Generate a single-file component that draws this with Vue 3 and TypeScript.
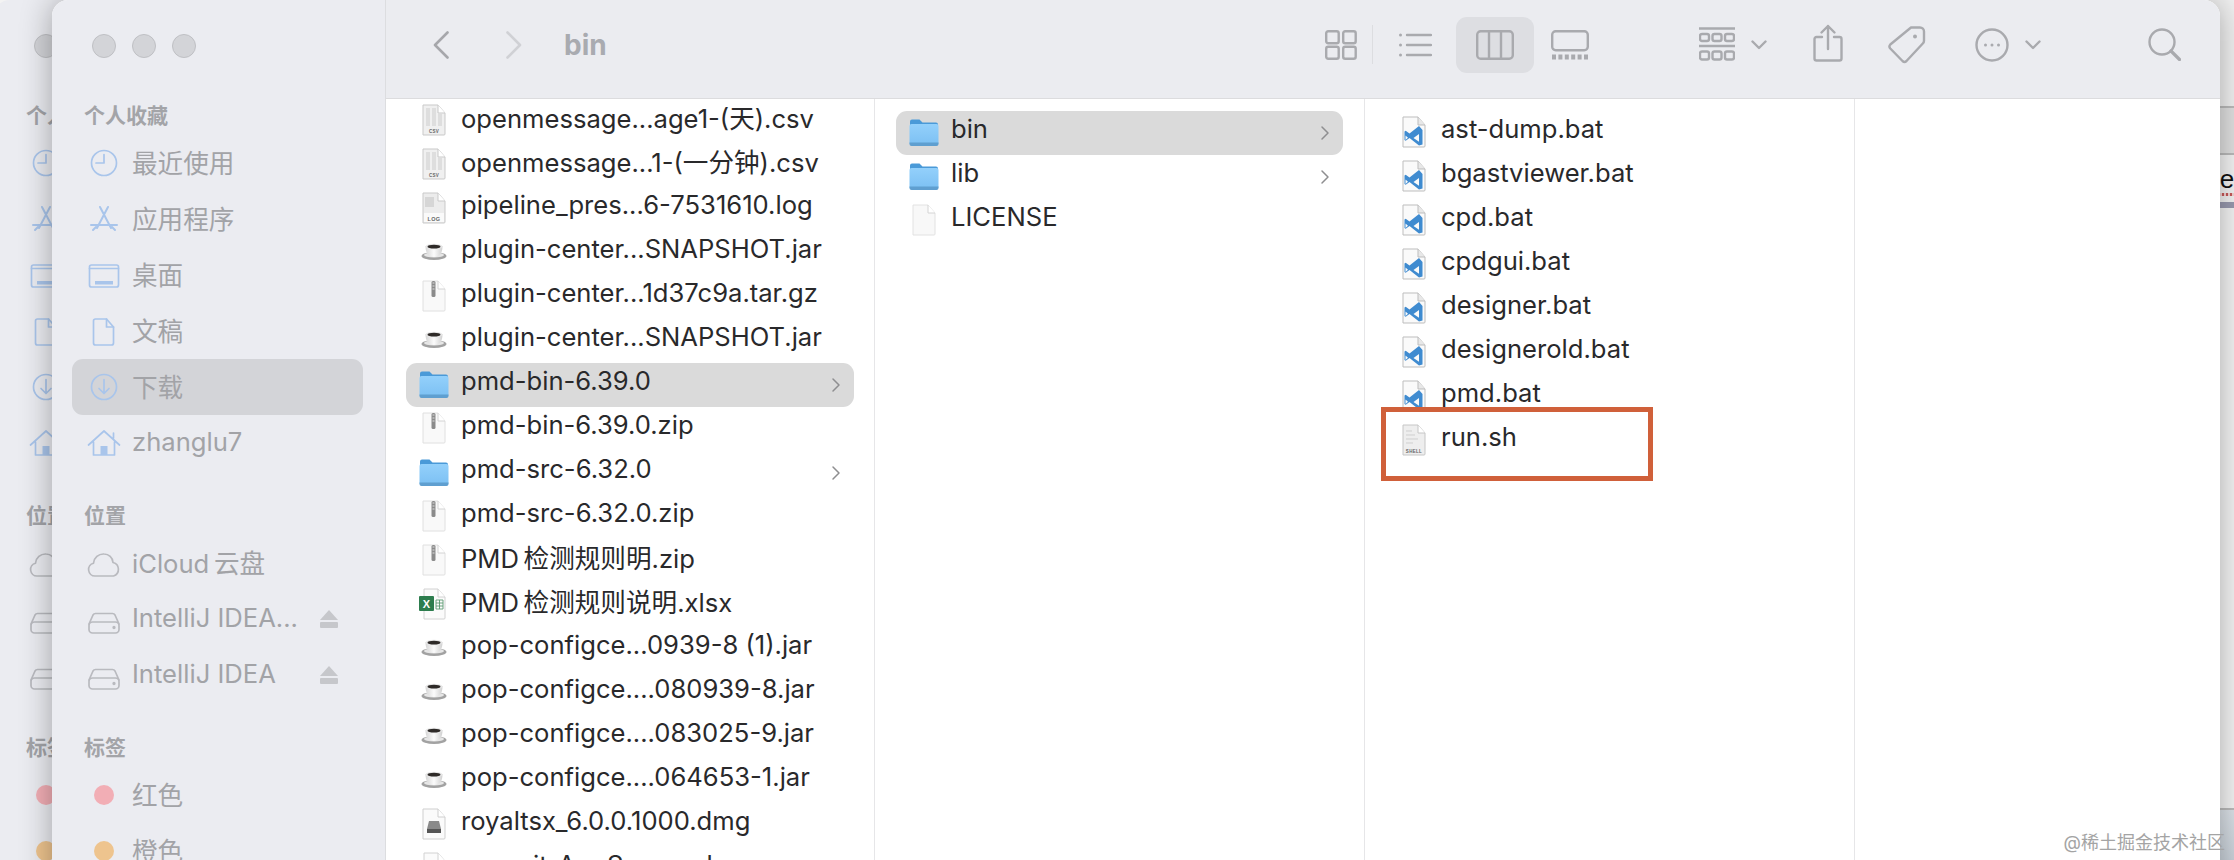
<template>
  <div class="desktop">
    <!-- shared file icons -->
    <svg class="sprite" width="0" height="0">
      <defs>
        <linearGradient id="folderBody" x1="0" y1="0" x2="0" y2="1">
          <stop offset="0" stop-color="#93d0fb" />
          <stop offset="1" stop-color="#7cc0f3" />
        </linearGradient>
        <linearGradient id="cupBody" x1="0" y1="0" x2="1" y2="0">
          <stop offset="0" stop-color="#d6d6d6" />
          <stop offset=".5" stop-color="#fbfbfb" />
          <stop offset="1" stop-color="#d0d0d0" />
        </linearGradient>
        <symbol id="f-folder" viewBox="0 0 32 32">
          <path d="M2 5.500a2 2 0 0 1 2-2h7.500l3 3h13.500a2 2 0 0 1 2 2V12H2z" fill="#4a9ad8" />
          <rect x="1.500" y="8" width="29" height="21" rx="2" fill="url(#folderBody)" />
          <path d="M1.500 26.500h29V28a2 2 0 0 1-2 2h-25a2 2 0 0 1-2-2z" fill="#5f9fd0" />
        </symbol>
        <symbol id="f-doc" viewBox="0 0 32 32">
          <path d="M5 1h15l7 8v21a1 1 0 0 1-1 1H5z" fill="#f8f8f8" stroke="#e2e2e2" />
          <path d="M20 1v8h7" fill="#fff" stroke="#d4d4d4" />
        </symbol>
        <symbol id="f-csv" viewBox="0 0 32 32">
          <path d="M5 1h15l7 8v21a1 1 0 0 1-1 1H5z" fill="#f0f0f0" stroke="#c9c9c9" />
          <path d="M20 1v8h7" fill="#fff" stroke="#c9c9c9" />
          <path d="M8 4h4v18H8zM14 4h4v18h-4zM20 10h4v12h-4z" fill="#dedede" />
          <text x="16" y="28.500" text-anchor="middle" class="mini">CSV</text>
        </symbol>
        <symbol id="f-log" viewBox="0 0 32 32">
          <path d="M5 1h15l7 8v21a1 1 0 0 1-1 1H5z" fill="#ececec" stroke="#c9c9c9" />
          <path d="M20 1v8h7" fill="#fff" stroke="#c9c9c9" />
          <path d="M7 5h9v10H7z" fill="#d6d6d6" />
          <rect x="6" y="21" width="20" height="9" fill="#fafafa" />
          <text x="16" y="28.500" text-anchor="middle" class="mini wide">LOG</text>
        </symbol>
        <symbol id="f-shell" viewBox="0 0 32 32">
          <path d="M5 1h15l7 8v21a1 1 0 0 1-1 1H5z" fill="#eeeeee" stroke="#c6c6c6" />
          <path d="M20 1v8h7" fill="#fff" stroke="#c6c6c6" />
          <path d="M8 7h6M8 11h9M8 15h12M8 19h7" stroke="#cfcfcf" stroke-width="1" />
          <text x="16" y="28.500" text-anchor="middle" class="mini">SHELL</text>
        </symbol>
        <symbol id="f-jar" viewBox="0 0 32 32">
          <ellipse cx="16" cy="20" rx="12.500" ry="4" fill="#a2a2a2" />
          <ellipse cx="16" cy="19" rx="10" ry="2.500" fill="#e6e6e6" />
          <path d="M7.500 10h17c0 7-2.500 11-8.500 11S7.500 17 7.500 10z" fill="url(#cupBody)" />
          <ellipse cx="16" cy="10.500" rx="8.500" ry="2.800" fill="#e8e8e8" />
          <ellipse cx="16" cy="10.700" rx="6.500" ry="1.900" fill="#2e2a28" />
        </symbol>
        <symbol id="f-zip" viewBox="0 0 32 32">
          <path d="M5 1h15l7 8v21a1 1 0 0 1-1 1H5z" fill="#f9f9f9" stroke="#e0e0e0" />
          <path d="M20 1v8h7" fill="#fff" stroke="#d4d4d4" />
          <rect x="13.500" y="1" width="4" height="16" rx="1.500" fill="#8b8b8b" />
          <path d="M14.500 3h2M14.500 6h2M14.500 9h2" stroke="#dcdcdc" />
        </symbol>
        <symbol id="f-xlsx" viewBox="0 0 32 32">
          <path d="M6 1h14l7 8v21a1 1 0 0 1-1 1H6z" fill="#fbfbfb" stroke="#d2d2d2" />
          <path d="M20 1v8h7" fill="#fff" stroke="#d2d2d2" />
          <rect x="1" y="8" width="15" height="15" rx="1" fill="#2d7d4e" />
          <text x="8.500" y="20" text-anchor="middle" class="xl">X</text>
          <path d="M18 12h7v9h-7zM18 15h7M18 18h7M21.500 12v9" fill="none" stroke="#5c9a73" stroke-width=".9" />
        </symbol>
        <symbol id="f-dmg" viewBox="0 0 32 32">
          <path d="M5 1h15l7 8v21a1 1 0 0 1-1 1H5z" fill="#fbfbfb" stroke="#cfcfcf" />
          <path d="M20 1v8h7" fill="#fff" stroke="#cfcfcf" />
          <path d="M11 13h10l2 8v4H9v-4z" fill="#8a8a8a" />
          <rect x="9" y="21" width="14" height="4" fill="#555" />
        </symbol>
        <symbol id="f-bat" viewBox="0 0 32 32">
          <path d="M5 1h15l7 8v21a1 1 0 0 1-1 1H5z" fill="#fafafa" stroke="#bdbdbd" />
          <path d="M20 1v8h7" fill="#e8e8e8" stroke="#bdbdbd" />
          <path d="M24.500 14v14.500l-3.500 1-9.500-7.500-3.800 2.800-1.200-.8v-8.400l1.200-.8 3.800 2.800 9.500-7.500zM21 18l-5.500 4 5.500 3.800zM7.500 19.500v4.500l2.500-2.200z" fill="#3f8bd0" fill-rule="evenodd" />
        </symbol>
      </defs>
    </svg>

    <!-- app behind the finder, only a sliver is visible -->
    <div class="back-app">
      <div class="strip strip-top"></div>
      <div class="strip strip-tabs"></div>
      <div class="strip strip-doc">
        <span class="he">He</span>
        <span class="squiggle"></span>
        <span class="select-bar"></span>
      </div>
      <div class="strip strip-foot"></div>
    </div>

    <div
      v-for="win in windows"
      :key="win"
      class="window"
      :class="win"
    >
      <aside class="sidebar">
        <div class="lights">
          <span></span>
          <span></span>
          <span></span>
        </div>
        <section v-for="group in sidebar" :key="group.title" class="side-group">
          <h4>{{ win === 'front' ? group.title : group.title.slice(0, 2) }}</h4>
          <div
            v-for="item in group.items"
            :key="item.label"
            class="side-row"
            :class="{ selected: win === 'front' && item.label === '下载' }"
          >
            <span v-if="item.dot" class="tag-dot" :style="{ background: item.dot }"></span>
            <svg v-else class="side-icon" :class="{ grey: group.title === '位置' }" viewBox="0 0 40 40" fill="none" stroke="currentColor" stroke-width="1.700" stroke-linecap="round" stroke-linejoin="round">
              <template v-if="item.icon === 'clock'">
                <circle cx="20" cy="20" r="12.500" />
                <path d="M20 11.500V20h-8" />
              </template>
              <template v-else-if="item.icon === 'apps'">
                <path d="M16 8l11 21M24 8L13 29M7 26h26M9 31l3-3M31 31l-3-3" stroke-width="2" />
              </template>
              <template v-else-if="item.icon === 'desktop'">
                <rect x="5.500" y="10" width="29" height="22" rx="2" />
                <path d="M5.500 13.500h29" />
                <rect x="11" y="26" width="18" height="3.500" fill="currentColor" stroke="none" />
              </template>
              <template v-else-if="item.icon === 'doc'">
                <path d="M11.500 8h11l7 8v16a2 2 0 0 1-2 2h-16a2 2 0 0 1-2-2V10a2 2 0 0 1 2-2z" />
                <path d="M22.500 8v8h7" />
              </template>
              <template v-else-if="item.icon === 'download'">
                <circle cx="20" cy="20" r="12.500" />
                <path d="M20 12.500V26M15 21.500l5 5 5-5" />
              </template>
              <template v-else-if="item.icon === 'home'">
                <path d="M4.500 22L20 8l15.500 14M9.500 19v13h21V19M29.500 10v5" />
                <rect x="16.500" y="23" width="7" height="9" fill="currentColor" stroke="none" />
              </template>
              <template v-else-if="item.icon === 'cloud'">
                <path d="M11 33a6.500 6.500 0 0 1-1.500-12.800A10 10 0 0 1 20 11a9 9 0 0 1 9 8.500A7 7 0 0 1 29.500 33z" />
              </template>
              <template v-else-if="item.icon === 'disk'">
                <path d="M5 25l4-9a3 3 0 0 1 2.500-1.500h17A3 3 0 0 1 31 16l4 9" />
                <rect x="5" y="23" width="30" height="11" rx="3.500" />
                <circle cx="30" cy="28.500" r=".8" fill="currentColor" />
              </template>
            </svg>
            <!-- labels of the back window lie fully under the front one -->
            <span v-if="win === 'front'" class="side-label">{{ item.label }}</span>
            <svg v-if="win === 'front' && item.eject" class="eject" viewBox="0 0 20 20">
              <path d="M10 1l9 10H1z" />
              <rect x="1" y="13" width="18" height="6" rx="1" />
            </svg>
          </div>
        </section>
      </aside>

      <main v-if="win === 'front'" class="content">
        <header class="toolbar">
          <svg class="nav-btn" viewBox="0 0 16 28" fill="none" stroke="#a6a7ab" stroke-width="2.600" stroke-linecap="round" stroke-linejoin="round">
            <path d="M14.500 1.500L2 14l12.500 12.500" />
          </svg>
          <svg class="nav-btn forward" viewBox="0 0 16 28" fill="none" stroke="#d0d1d5" stroke-width="2.600" stroke-linecap="round" stroke-linejoin="round">
            <path d="M1.500 1.500L14 14 1.500 26.500" />
          </svg>
          <span class="title">bin</span>

          <div class="views">
            <svg class="tool" width="32" height="30" viewBox="0 0 32 30">
              <rect x="1.200" y="1.200" width="12.500" height="12" rx="2" />
              <rect x="18.200" y="1.200" width="12.500" height="12" rx="2" />
              <rect x="1.200" y="16.800" width="12.500" height="12" rx="2" />
              <rect x="18.200" y="16.800" width="12.500" height="12" rx="2" />
            </svg>
            <span class="divider"></span>
            <svg class="tool" width="34" height="26" viewBox="0 0 34 26">
              <path d="M9 3h24M9 13h24M9 23h24" />
              <circle cx="2.500" cy="3" r="1.500" class="solid" />
              <circle cx="2.500" cy="13" r="1.500" class="solid" />
              <circle cx="2.500" cy="23" r="1.500" class="solid" />
            </svg>
            <div class="view-active">
              <svg class="tool" width="38" height="30" viewBox="0 0 38 30">
                <rect x="1.200" y="1.200" width="35.600" height="27.600" rx="3.500" />
                <path d="M13 1.200v27.600M25 1.200v27.600" />
              </svg>
            </div>
            <svg class="tool" width="38" height="30" viewBox="0 0 38 30">
              <rect x="1.200" y="1.200" width="35.600" height="19" rx="3.500" />
              <path class="film" d="M1 27h36" />
            </svg>
          </div>

          <div class="actions">
            <div class="with-caret">
              <svg class="tool" width="36" height="36" viewBox="0 0 36 36">
                <path d="M0 1.500h36M0 19h36" />
                <g>
                  <rect x="1" y="7" width="9" height="7" rx="2" />
                  <rect x="13.500" y="7" width="9" height="7" rx="2" />
                  <rect x="26" y="7" width="9" height="7" rx="2" />
                  <rect x="1" y="24.500" width="9" height="8" rx="2" />
                  <rect x="13.500" y="24.500" width="9" height="8" rx="2" />
                  <rect x="26" y="24.500" width="9" height="8" rx="2" />
                </g>
              </svg>
              <svg class="tool caret" width="16" height="10" viewBox="0 0 16 10"><path d="M1.500 1.500L8 8l6.500-6.500" /></svg>
            </div>
            <svg class="tool share" width="30" height="38" viewBox="0 0 30 38">
              <path d="M9 13H3.500a2 2 0 0 0-2 2v19.500a2 2 0 0 0 2 2h23a2 2 0 0 0 2-2V15a2 2 0 0 0-2-2H21" />
              <path d="M15 25V2M8.500 8.500L15 2l6.500 6.500" />
            </svg>
            <svg class="tool tag" width="38" height="38" viewBox="0 0 38 38">
              <path d="M23 1.500h9a4 4 0 0 1 4 4v9a4 4 0 0 1-1.200 3L18.500 35a3 3 0 0 1-4 0L2.300 22.500a3 3 0 0 1 0-4z" />
              <circle cx="27" cy="10.500" r="2" class="solid" />
            </svg>
            <div class="with-caret more">
              <svg class="tool" width="34" height="34" viewBox="0 0 34 34">
                <circle cx="17" cy="17" r="15.500" />
                <circle cx="10.500" cy="17" r="1.500" class="solid" />
                <circle cx="17" cy="17" r="1.500" class="solid" />
                <circle cx="23.500" cy="17" r="1.500" class="solid" />
              </svg>
              <svg class="tool caret" width="16" height="10" viewBox="0 0 16 10"><path d="M1.500 1.500L8 8l6.500-6.500" /></svg>
            </div>
            <svg class="tool search" width="33" height="33" viewBox="0 0 33 33">
              <circle cx="14" cy="14" r="12.500" />
              <path d="M23 23l8.500 8.500" stroke-width="3.200" />
            </svg>
          </div>
        </header>

        <div class="columns">
          <div v-for="(col, i) in columns" :key="i" class="column" :class="{ first: i === 0 }">
            <div
              v-for="(row, r) in col"
              :key="r"
              class="file-row"
              :class="{ selected: row.selected }"
            >
              <svg class="file-icon"><use :href="`#f-${row.icon}`" /></svg>
              <span class="file-name">{{ row.name }}</span>
              <svg v-if="row.icon === 'folder'" class="chevron" viewBox="0 0 10 16" fill="none" stroke="#8e8e90" stroke-width="1.500" stroke-linecap="round" stroke-linejoin="round">
                <path d="M2 2l6 6-6 6" />
              </svg>
            </div>
          </div>
          <div class="column empty"></div>
        </div>
      </main>
    </div>

    <div class="callout"></div>
    <div class="watermark">@稀土掘金技术社区</div>
  </div>
</template>

<script setup lang="ts">
interface SideItem {
  label: string
  icon?: string
  dot?: string
  eject?: boolean
}

interface SideGroup {
  title: string
  items: SideItem[]
}

interface FileRow {
  name: string
  icon: string
  selected?: boolean
}

const windows = ['back', 'front']

const sidebar: SideGroup[] = [
  {
    title: '个人收藏',
    items: [
      { label: '最近使用', icon: 'clock' },
      { label: '应用程序', icon: 'apps' },
      { label: '桌面', icon: 'desktop' },
      { label: '文稿', icon: 'doc' },
      { label: '下载', icon: 'download' },
      { label: 'zhanglu7', icon: 'home' },
    ],
  },
  {
    title: '位置',
    items: [
      { label: 'iCloud\u2009云盘', icon: 'cloud' },
      { label: 'IntelliJ IDEA...', icon: 'disk', eject: true },
      { label: 'IntelliJ IDEA', icon: 'disk', eject: true },
    ],
  },
  {
    title: '标签',
    items: [
      { label: '红色', dot: '#f2aeb5' },
      { label: '橙色', dot: '#eec48e' },
    ],
  },
]

const columns: FileRow[][] = [
  [
    { name: 'openmessage...age1-(天).csv', icon: 'csv' },
    { name: 'openmessage...1-(一分钟).csv', icon: 'csv' },
    { name: 'pipeline_pres...6-7531610.log', icon: 'log' },
    { name: 'plugin-center...SNAPSHOT.jar', icon: 'jar' },
    { name: 'plugin-center...1d37c9a.tar.gz', icon: 'zip' },
    { name: 'plugin-center...SNAPSHOT.jar', icon: 'jar' },
    { name: 'pmd-bin-6.39.0', icon: 'folder', selected: true },
    { name: 'pmd-bin-6.39.0.zip', icon: 'zip' },
    { name: 'pmd-src-6.32.0', icon: 'folder' },
    { name: 'pmd-src-6.32.0.zip', icon: 'zip' },
    { name: 'PMD\u2009检测规则明.zip', icon: 'zip' },
    { name: 'PMD\u2009检测规则说明.xlsx', icon: 'xlsx' },
    { name: 'pop-configce...0939-8 (1).jar', icon: 'jar' },
    { name: 'pop-configce....080939-8.jar', icon: 'jar' },
    { name: 'pop-configce....083025-9.jar', icon: 'jar' },
    { name: 'pop-configce....064653-1.jar', icon: 'jar' },
    { name: 'royaltsx_6.0.0.1000.dmg', icon: 'dmg' },
    { name: 'pop-sit-AppServer.xlsx', icon: 'xlsx' },
  ],
  [
    { name: 'bin', icon: 'folder', selected: true },
    { name: 'lib', icon: 'folder' },
    { name: 'LICENSE', icon: 'doc' },
  ],
  [
    { name: 'ast-dump.bat', icon: 'bat' },
    { name: 'bgastviewer.bat', icon: 'bat' },
    { name: 'cpd.bat', icon: 'bat' },
    { name: 'cpdgui.bat', icon: 'bat' },
    { name: 'designer.bat', icon: 'bat' },
    { name: 'designerold.bat', icon: 'bat' },
    { name: 'pmd.bat', icon: 'bat' },
    { name: 'run.sh', icon: 'shell' },
  ],
]
</script>

<style>
html,
body {
  margin: 0;
  background: #fff;
}
</style>

<style scoped>
.desktop {
  position: relative;
  width: 2234px;
  height: 860px;
  overflow: hidden;
  background: #f3f3f3;
  font-family: Inter, "Noto Sans CJK SC", sans-serif;
}

.sprite {
  position: absolute;
}

.mini {
  font: 600 4.500px "Liberation Sans", sans-serif;
  fill: #666;
  letter-spacing: 0.3px;
}

.mini.wide {
  font-size: 5.500px;
}

.xl {
  font: 700 11px "Liberation Sans", sans-serif;
  fill: #fff;
}

/* sliver of the other app at the right edge */
.back-app {
  position: absolute;
  right: 0;
  top: 0;
  bottom: 0;
  width: 20px;
  display: flex;
  flex-direction: column;
}

.strip {
  position: relative;
  border-bottom: 2px solid #bcbcbc;
  overflow: hidden;
}

.strip-top {
  height: 106px;
  background: #f2f2f2;
}

.strip-tabs {
  height: 45px;
  background: #e2e2e2;
}

.strip-doc {
  height: 653px;
  background: #f5f5f5;
}

.strip-foot {
  flex: 1;
  border: 0;
  background: linear-gradient(#dde3e9, #cbd3db);
}

.he {
  position: absolute;
  left: -13px;
  top: 9px;
  font: 26px "Liberation Sans", sans-serif;
  color: #111;
}

.squiggle {
  position: absolute;
  left: 0;
  right: 0;
  top: 38px;
  height: 3px;
  background: repeating-linear-gradient(90deg, #c85a5a 0 2px, #f5d5d5 2px 4px);
}

.select-bar {
  position: absolute;
  left: 0;
  right: 0;
  top: 47px;
  height: 6px;
  background: #9a9bb0;
}

/* finder windows */
.window {
  position: absolute;
  top: 0;
  height: 900px;
  display: flex;
  border-radius: 16px 16px 0 0;
  overflow: hidden;
}

.window.back {
  left: -6px;
  width: 334px;
  background: #ecedf1;
}

.window.front {
  left: 52px;
  width: 2168px;
  background: #fff;
  box-shadow: 0 0 32px rgba(0, 0, 0, 0.32);
}

.sidebar {
  flex: 0 0 334px;
  box-sizing: border-box;
  padding-top: 34px;
  background: #ebecf1;
  border-right: 1px solid #dcdde0;
}

.lights {
  display: flex;
  gap: 16px;
  height: 24px;
  padding-left: 40px;
  margin-bottom: 39px;
}

.lights span {
  box-sizing: border-box;
  width: 24px;
  height: 24px;
  border-radius: 50%;
  background: #d3d4d8;
  border: 1px solid #bfc0c4;
}

.side-group + .side-group {
  margin-top: 26px;
}

.side-group h4 {
  margin: 0;
  height: 38px;
  line-height: 38px;
  padding-left: 32px;
  font-size: 21px;
  font-weight: 700;
  color: #a3a4a8;
}

.side-row {
  display: flex;
  align-items: center;
  height: 56px;
  margin: 0 22px 0 20px;
  padding: 0 24px 0 12px;
  border-radius: 11px;
}

.side-row.selected {
  background: #d3d4d8;
}

.side-icon {
  flex: none;
  width: 40px;
  height: 40px;
  color: #a9c5eb;
}

.side-icon.grey {
  color: #b9babf;
}

.tag-dot {
  flex: none;
  width: 20px;
  height: 20px;
  margin: 0 10px;
  border-radius: 50%;
}

.side-label {
  flex: 1;
  margin-left: 8px;
  padding-bottom: 4px;
  font-size: 25.600px;
  color: #a2a3a7;
  white-space: nowrap;
}

.eject {
  flex: none;
  width: 20px;
  height: 20px;
  fill: #c6c7cb;
}

.content {
  flex: 1;
  min-width: 0;
  display: flex;
  flex-direction: column;
}

.toolbar {
  flex: none;
  box-sizing: border-box;
  height: 99px;
  padding: 0 39px 9px 47px;
  display: flex;
  align-items: center;
  background: #ebecf0;
  border-bottom: 1px solid #dcdcde;
}

.nav-btn {
  flex: none;
  width: 16px;
  height: 28px;
}

.nav-btn.forward {
  margin-left: 57px;
}

.title {
  margin-left: 42px;
  font-size: 28px;
  font-weight: 700;
  color: #a9abb0;
}

.views {
  margin-left: auto;
  display: flex;
  align-items: center;
}

.tool {
  flex: none;
  fill: none;
  stroke: #a9aaae;
  stroke-width: 2.400;
  stroke-linecap: round;
  stroke-linejoin: round;
}

.tool .solid {
  fill: #a9aaae;
  stroke: none;
}

.tool .film {
  stroke-width: 5;
  stroke-linecap: butt;
  stroke-dasharray: 4 2.400;
}

.divider {
  width: 1px;
  height: 39px;
  margin: 0 25px 0 15px;
  background: #dcdde0;
}

.view-active {
  width: 78px;
  height: 56px;
  margin: 0 17px 0 24px;
  border-radius: 11px;
  background: #dddee2;
  display: flex;
  align-items: center;
  justify-content: center;
}

.actions {
  margin-left: 110px;
  display: flex;
  align-items: center;
}

.with-caret {
  display: flex;
  align-items: center;
  gap: 16px;
}

.share {
  margin: -4px 0 0 46px;
}

.tag {
  margin-left: 45px;
}

.more {
  margin-left: 49px;
}

.search {
  margin-left: 107px;
}

.columns {
  flex: 1;
  display: flex;
  min-height: 0;
  background: #fff;
}

.column {
  flex: 0 0 490px;
  box-sizing: border-box;
  padding: 12px 21px 0;
  border-right: 1px solid #e6e6e8;
}

.column.first {
  flex-basis: 489px;
  padding: 0 20px;
}

.column.empty {
  flex: 1;
  border: 0;
}

.file-row {
  display: flex;
  align-items: center;
  height: 44px;
  padding: 0 13px 0 12px;
  border-radius: 11px;
}

.file-row.selected {
  background: #dadada;
}

.file-icon {
  flex: none;
  width: 32px;
  height: 32px;
  margin-top: -2px;
}

.file-name {
  flex: 1;
  margin-left: 11px;
  padding-bottom: 9px;
  font-size: 25.600px;
  color: #29292b;
  white-space: nowrap;
}

.chevron {
  flex: none;
  width: 10px;
  height: 16px;
}

/* annotation drawn over the screenshot */
.callout {
  position: absolute;
  left: 1381px;
  top: 407px;
  width: 272px;
  height: 74px;
  box-sizing: border-box;
  border: 5px solid #d0603a;
}

.watermark {
  position: absolute;
  right: 9px;
  top: 830px;
  font-size: 18px;
  line-height: 26px;
  color: #a4a4a4;
  white-space: nowrap;
}
</style>
